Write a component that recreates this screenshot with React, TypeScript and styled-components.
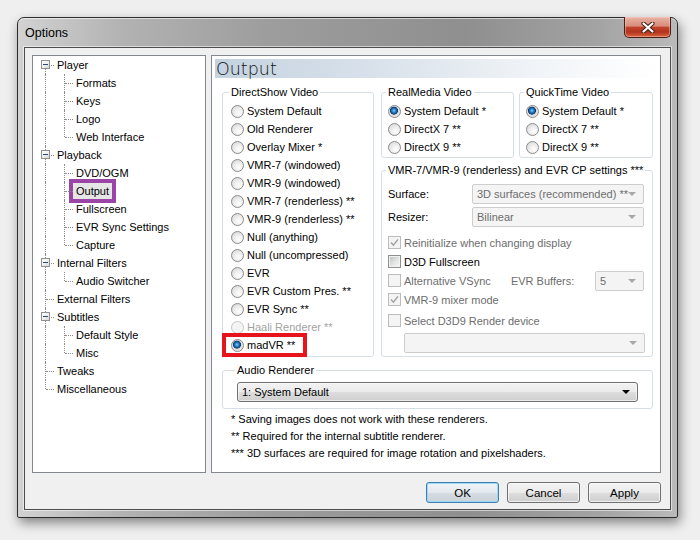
import React from 'react';
import styled, { createGlobalStyle, css } from 'styled-components';

const GlobalStyle = createGlobalStyle`
  html, body {
    margin: 0;
    padding: 0;
    background: #efefef;
  }
  body {
    font-family: "Liberation Sans", Arial, sans-serif;
    font-size: 11px;
    color: #000;
  }
`;

const Page = styled.div`
  width: 700px;
  height: 540px;
  box-sizing: border-box;
  padding: 17px 0 0 17px;
`;

const Window = styled.div`
  width: 661px;
  box-sizing: border-box;
  border: 1px solid #2c2c2c;
  border-radius: 7px 7px 2px 2px;
  padding: 0 6px 7px;
  background: linear-gradient(90deg, #d2d2d2 0%, #b2b2b2 16%, #9d9d9d 38%, #8f8f8f 68%, #a3a3a3 88%, #bababa 100%);
  box-shadow: 2px 5px 12px rgba(0, 0, 0, 0.45), inset 0 1px 0 rgba(255, 255, 255, 0.6);
`;

const TitleBar = styled.div`
  height: 29px;
  display: flex;
  align-items: center;
  justify-content: space-between;
`;

const Title = styled.span`
  font-size: 12.5px;
  padding-left: 1px;
  color: #000;
`;

const CloseButton = styled.div`
  align-self: flex-start;
  margin-top: -1px;
  width: 47px;
  height: 21px;
  box-sizing: border-box;
  border: 1px solid #4a1d14;
  border-top: none;
  border-radius: 0 0 5px 5px;
  display: flex;
  align-items: center;
  justify-content: center;
  background: linear-gradient(#e9b3a6 0%, #d98c79 45%, #c1432b 52%, #b3341d 75%, #d9643e 100%);
  box-shadow: inset 0 0 0 1px rgba(255, 210, 200, 0.45);
`;

const Client = styled.div`
  height: 463px;
  box-sizing: border-box;
  background: #f0f0f0;
  border: 1px solid #4d4d4d;
  box-shadow: 0 0 0 1px rgba(255, 255, 255, 0.55);
  padding: 7px 9px 6px 7px;
  display: flex;
  flex-direction: column;
`;

const MainRow = styled.div`
  display: flex;
  gap: 5px;
  height: 418px;
`;

const Tree = styled.div`
  width: 174px;
  box-sizing: border-box;
  border: 1px solid #828790;
  background: #fff;
  padding-left: 4px;
`;

const TreeRow = styled.div`
  display: flex;
  align-items: center;
  height: 18px;
`;

type Vert = 'full' | 'top' | 'bottom' | 'none';

const Guide = styled.span<{ $v: Vert; $h?: boolean }>`
  position: relative;
  width: 19px;
  height: 18px;
  flex-shrink: 0;
  &::before {
    content: '';
    display: ${p => (p.$v === 'none' ? 'none' : 'block')};
    position: absolute;
    left: 8px;
    top: ${p => (p.$v === 'bottom' ? '9px' : '0')};
    bottom: ${p => (p.$v === 'top' ? '9px' : '0')};
    border-left: 1px dotted #8c8c8c;
  }
  &::after {
    content: '';
    display: ${p => (p.$h ? 'block' : 'none')};
    position: absolute;
    left: 9px;
    top: 9px;
    width: 8px;
    border-top: 1px dotted #8c8c8c;
  }
`;

const Expander = styled.span`
  position: absolute;
  z-index: 1;
  left: 4px;
  top: 4px;
  width: 9px;
  height: 9px;
  box-sizing: border-box;
  border: 1px solid #919191;
  background: linear-gradient(135deg, #ffffff 0%, #f0f0f0 50%, #d6d6d6 100%);
  display: flex;
  align-items: center;
  justify-content: center;
  &::after {
    content: '';
    width: 5px;
    height: 1px;
    background: #2a4b7a;
  }
`;

const TreeLabel = styled.span<{ $selected?: boolean }>`
  padding-left: 1px;
  line-height: 14px;
  white-space: nowrap;
  ${p =>
    p.$selected &&
    css`
      margin-left: -2px;
      padding: 1px 3px 1px 3px;
      background: #e6e6e6;
      outline: 4px solid #9b45a6;
      outline-offset: 0;
    `}
`;

const Panel = styled.div`
  width: 450px;
  box-sizing: border-box;
  border: 1px solid #828790;
  background: #fff;
`;

const Header = styled.div`
  margin: 3px 3px 0;
  height: 19px;
  padding-left: 1px;
  font-family: "DejaVu Sans", "Liberation Sans", sans-serif;
  font-weight: 200;
  font-size: 17.5px;
  line-height: 21px;
  color: #111;
  background: linear-gradient(90deg, #c4d2e0 0%, #dbe3ec 40%, #f2f5f8 75%, #ffffff 100%);
`;

const Content = styled.div`
  padding: 7px 7px 0 10px;
`;

const TopRow = styled.div`
  display: flex;
  gap: 7px;
`;

const Column = styled.div`
  width: 272px;
  display: flex;
  flex-direction: column;
  gap: 5px;
`;

const PairRow = styled.div`
  display: flex;
  gap: 5px;
`;

const Group = styled.fieldset<{ $w?: number; $h: number; $pad: string; $top?: number }>`
  margin: ${p => p.$top ?? 0}px 0 0;
  min-width: 0;
  box-sizing: border-box;
  width: ${p => (p.$w ? `${p.$w}px` : 'auto')};
  height: ${p => p.$h}px;
  padding: ${p => p.$pad};
  border: 1px solid #d5dfe5;
  border-radius: 3px;
`;

const Legend = styled.legend`
  padding: 0 2px;
  margin-left: -2px;
  line-height: 14px;
  font-size: 11px;
  white-space: nowrap;
  color: #000;
`;

const RadioRow = styled.div<{ $off?: boolean; $mark?: boolean }>`
  display: flex;
  align-items: center;
  gap: 3px;
  height: 18px;
  white-space: nowrap;
  color: ${p => (p.$off ? '#a3a3a3' : '#000')};
  ${p =>
    p.$mark &&
    css`
      width: fit-content;
      margin-left: -6px;
      padding: 0 9px 0 6px;
      outline: 4px solid #e8141c;
      outline-offset: -1px;
    `}
`;

const RadioDot = styled.span<{ $on?: boolean; $off?: boolean }>`
  width: 13px;
  height: 13px;
  box-sizing: border-box;
  border-radius: 50%;
  flex-shrink: 0;
  border: 1px solid ${p => (p.$off ? '#c6c6c6' : '#8a8a8a')};
  background: ${p =>
    p.$on
      ? 'radial-gradient(circle at 45% 42%, #9bdcff 0, #3592de 1.3px, #1b5f9f 2.8px, #0d3a6a 3.7px, #dcdcdc 4.3px, #f7f7f7 100%)'
      : p.$off
      ? '#f4f4f4'
      : 'radial-gradient(circle at 62% 66%, #ffffff 0, #f1f1f1 35%, #d2d2d2 100%)'};
`;

const CheckRow = styled.div<{ $off?: boolean; $gap?: number }>`
  display: flex;
  align-items: center;
  gap: 3px;
  height: 19px;
  margin-top: ${p => p.$gap ?? 0}px;
  white-space: nowrap;
  color: ${p => (p.$off ? '#6d6d6d' : '#000')};
`;

const CheckItem = styled.span`
  display: flex;
  align-items: center;
  gap: 3px;
  width: 123px;
`;

const CheckBox = styled.span<{ $off?: boolean }>`
  width: 13px;
  height: 13px;
  box-sizing: border-box;
  flex-shrink: 0;
  display: flex;
  align-items: center;
  justify-content: center;
  border: 1px solid ${p => (p.$off ? '#bcbcbc' : '#8e8f8f')};
  background: ${p => (p.$off ? '#f4f4f4' : 'linear-gradient(135deg, #b9bcc0 0%, #e4e4e4 55%, #f9f9f9 100%)')};
  box-shadow: inset 0 0 0 1px ${p => (p.$off ? '#f4f4f4' : '#f2f2f2')};
`;

const FieldRow = styled.div<{ $gap?: number }>`
  display: flex;
  align-items: center;
  margin-top: ${p => p.$gap ?? 0}px;
`;

const FieldLabel = styled.span<{ $w: number; $off?: boolean }>`
  width: ${p => p.$w}px;
  flex-shrink: 0;
  color: ${p => (p.$off ? '#6d6d6d' : '#000')};
`;

const Combo = styled.div<{ $off?: boolean; $w?: number; $indent?: number; $gap?: number }>`
  width: ${p => (p.$w ? `${p.$w}px` : '100%')};
  height: 20px;
  box-sizing: border-box;
  margin-left: ${p => p.$indent ?? 0}px;
  margin-top: ${p => p.$gap ?? 0}px;
  display: flex;
  align-items: center;
  justify-content: space-between;
  padding: 0 7px 0 4px;
  white-space: nowrap;
  ${p =>
    p.$off
      ? css`
          border: 1px solid #cdcdcd;
          border-radius: 2px;
          background: #f4f4f4;
          color: #6d6d6d;
        `
      : css`
          border: 1px solid #707070;
          border-radius: 3px;
          background: linear-gradient(#f2f2f2 0%, #ebebeb 50%, #dddddd 51%, #cfcfcf 100%);
          box-shadow: inset 0 0 0 1px rgba(255, 255, 255, 0.6);
          color: #000;
        `}
`;

const Arrow = styled.span<{ $off?: boolean }>`
  width: 0;
  height: 0;
  border-left: 4px solid transparent;
  border-right: 4px solid transparent;
  border-top: 4px solid ${p => (p.$off ? '#a8a8a8' : '#000')};
`;

const Notes = styled.div`
  margin-top: 2px;
  padding-left: 9px;
  line-height: 17px;
  color: #000;
`;

const ButtonRow = styled.div`
  display: flex;
  justify-content: flex-end;
  gap: 8px;
  margin-top: 9px;
`;

const Button = styled.button<{ $default?: boolean }>`
  width: 73px;
  height: 21px;
  box-sizing: border-box;
  font: inherit;
  font-size: 11.5px;
  color: #000;
  padding: 0;
  border-radius: 3px;
  border: 1px solid ${p => (p.$default ? '#3c7fb1' : '#707070')};
  background: ${p =>
    p.$default
      ? 'linear-gradient(#eef3f7 0%, #e3e9ee 50%, #d5dce2 51%, #cad2d9 100%)'
      : 'linear-gradient(#f2f2f2 0%, #ebebeb 50%, #dddddd 51%, #cfcfcf 100%)'};
  box-shadow: inset 0 0 0 1px ${p => (p.$default ? 'rgba(150, 215, 245, 0.9)' : 'rgba(255, 255, 255, 0.65)')};
`;

type Node = { label: string; children?: string[] };

const tree: Node[] = [
  { label: 'Player', children: ['Formats', 'Keys', 'Logo', 'Web Interface'] },
  { label: 'Playback', children: ['DVD/OGM', 'Output', 'Fullscreen', 'EVR Sync Settings', 'Capture'] },
  { label: 'Internal Filters', children: ['Audio Switcher'] },
  { label: 'External Filters' },
  { label: 'Subtitles', children: ['Default Style', 'Misc'] },
  { label: 'Tweaks' },
  { label: 'Miscellaneous' },
];

const directShow = [
  'System Default',
  'Old Renderer',
  'Overlay Mixer *',
  'VMR-7 (windowed)',
  'VMR-9 (windowed)',
  'VMR-7 (renderless) **',
  'VMR-9 (renderless) **',
  'Null (anything)',
  'Null (uncompressed)',
  'EVR',
  'EVR Custom Pres. **',
  'EVR Sync **',
];

const media = ['System Default *', 'DirectX 7 **', 'DirectX 9 **'];

const Check = ({ off }: { off?: boolean }) => (
  <svg width="9" height="9" viewBox="0 0 9 9">
    <path d="M1 4.6 L3.4 7.2 L8 1.4" fill="none" stroke={off ? '#a2a2a2' : '#333'} strokeWidth="1.5" />
  </svg>
);

const TreeView = () => (
  <Tree>
    {tree.map((node, i) => {
      const last = i === tree.length - 1;
      const v: Vert = i === 0 ? 'bottom' : last ? 'top' : 'full';
      return (
        <React.Fragment key={node.label}>
          <TreeRow>
            <Guide $v={v} $h>
              {node.children && <Expander />}
            </Guide>
            <TreeLabel>{node.label}</TreeLabel>
          </TreeRow>
          {node.children?.map((child, j) => (
            <TreeRow key={child}>
              <Guide $v={last ? 'none' : 'full'} />
              <Guide $v={j === node.children!.length - 1 ? 'top' : 'full'} $h />
              <TreeLabel $selected={child === 'Output'}>{child}</TreeLabel>
            </TreeRow>
          ))}
        </React.Fragment>
      );
    })}
  </Tree>
);

const MediaGroup = ({ title, w }: { title: string; w: number }) => (
  <Group $w={w} $h={73} $pad="3px 4px 0 6px">
    <Legend>{title}</Legend>
    {media.map((m, i) => (
      <RadioRow key={m}>
        <RadioDot $on={i === 0} />
        {m}
      </RadioRow>
    ))}
  </Group>
);

export default function App() {
  return (
    <Page>
      <GlobalStyle />
      <Window>
        <TitleBar>
          <Title>Options</Title>
          <CloseButton>
            <svg width="14" height="11" viewBox="0 0 14 11">
              <path d="M2.5 1.5 L11.5 9.5 M11.5 1.5 L2.5 9.5" stroke="#4a1d14" strokeWidth="4.2" strokeLinecap="round" />
              <path d="M2.5 1.5 L11.5 9.5 M11.5 1.5 L2.5 9.5" stroke="#fff" strokeWidth="2.2" strokeLinecap="round" />
            </svg>
          </CloseButton>
        </TitleBar>
        <Client>
          <MainRow>
            <TreeView />
            <Panel>
              <Header>Output</Header>
              <Content>
                <TopRow>
                  <Group $w={152} $h={272} $pad="3px 4px 0 8px">
                    <Legend>DirectShow Video</Legend>
                    {directShow.map(d => (
                      <RadioRow key={d}>
                        <RadioDot />
                        {d}
                      </RadioRow>
                    ))}
                    <RadioRow $off>
                      <RadioDot $off />
                      Haali Renderer **
                    </RadioRow>
                    <RadioRow $mark>
                      <RadioDot $on />
                      madVR **
                    </RadioRow>
                  </Group>
                  <Column>
                    <PairRow>
                      <MediaGroup title="RealMedia Video" w={133} />
                      <MediaGroup title="QuickTime Video" w={134} />
                    </PairRow>
                    <Group $h={194} $pad="7px 8px 0 6px">
                      <Legend>VMR-7/VMR-9 (renderless) and EVR CP settings ***</Legend>
                      <FieldRow>
                        <FieldLabel $w={84}>Surface:</FieldLabel>
                        <Combo $off>
                          3D surfaces (recommended) **
                          <Arrow $off />
                        </Combo>
                      </FieldRow>
                      <FieldRow $gap={3}>
                        <FieldLabel $w={84}>Resizer:</FieldLabel>
                        <Combo $off>
                          Bilinear
                          <Arrow $off />
                        </Combo>
                      </FieldRow>
                      <CheckRow $off $gap={6}>
                        <CheckBox $off>
                          <Check off />
                        </CheckBox>
                        Reinitialize when changing display
                      </CheckRow>
                      <CheckRow>
                        <CheckBox />
                        D3D Fullscreen
                      </CheckRow>
                      <CheckRow $off>
                        <CheckItem>
                          <CheckBox $off />
                          Alternative VSync
                        </CheckItem>
                        <FieldLabel $w={81} $off>
                          EVR Buffers:
                        </FieldLabel>
                        <Combo $off $w={50}>
                          5
                          <Arrow $off />
                        </Combo>
                      </CheckRow>
                      <CheckRow $off>
                        <CheckBox $off>
                          <Check off />
                        </CheckBox>
                        VMR-9 mixer mode
                      </CheckRow>
                      <CheckRow $off $gap={2}>
                        <CheckBox $off />
                        Select D3D9 Render device
                      </CheckRow>
                      <Combo $off $w={241} $indent={16} $gap={3}>
                        <span />
                        <Arrow $off />
                      </Combo>
                    </Group>
                  </Column>
                </TopRow>
                <Group $h={46} $pad="5px 14px 0 14px" $top={6}>
                  <Legend>Audio Renderer</Legend>
                  <Combo>
                    1: System Default
                    <Arrow />
                  </Combo>
                </Group>
                <Notes>
                  <div>* Saving images does not work with these renderers.</div>
                  <div>** Required for the internal subtitle renderer.</div>
                  <div>*** 3D surfaces are required for image rotation and pixelshaders.</div>
                </Notes>
              </Content>
            </Panel>
          </MainRow>
          <ButtonRow>
            <Button $default>OK</Button>
            <Button>Cancel</Button>
            <Button>Apply</Button>
          </ButtonRow>
        </Client>
      </Window>
    </Page>
  );
}
